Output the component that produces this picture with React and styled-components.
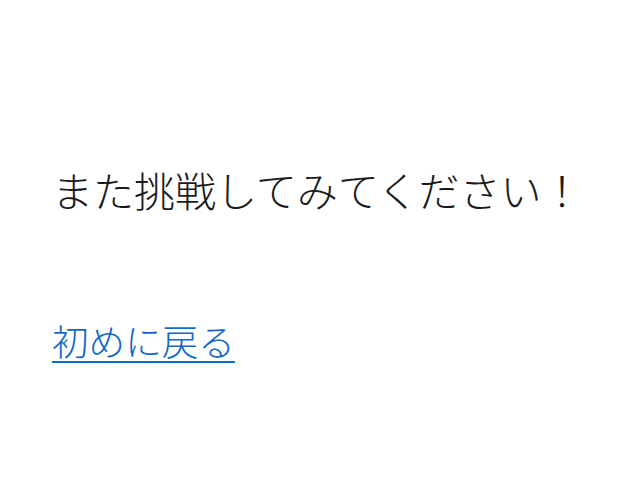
import React from 'react';
import styled, { createGlobalStyle } from 'styled-components';

const GlobalStyle = createGlobalStyle`
  html, body {
    margin: 0;
    padding: 0;
    background: #fff;
    font-family: "Noto Sans CJK JP", "Noto Sans", sans-serif;
  }
`;

const Page = styled.div`
  display: flex;
  flex-direction: column;
  padding: 163px 52px 0;
`;

const Message = styled.h1`
  margin: 0;
  font-size: 41px;
  font-weight: 200;
  line-height: 52px;
  color: #1a1a1a;
`;

const BackLink = styled.a`
  align-self: flex-start;
  margin-top: 102px;
  font-size: 36.6px;
  font-weight: 200;
  line-height: 48px;
  color: #1068c8;
  text-decoration: underline;
  text-decoration-thickness: 2px;
  text-underline-offset: 5px;
`;

const App = () => {
  return (
    <Page>
      <GlobalStyle />
      <Message>また挑戦してみてください！</Message>
      <BackLink href="#">初めに戻る</BackLink>
    </Page>
  );
};

export default App;
